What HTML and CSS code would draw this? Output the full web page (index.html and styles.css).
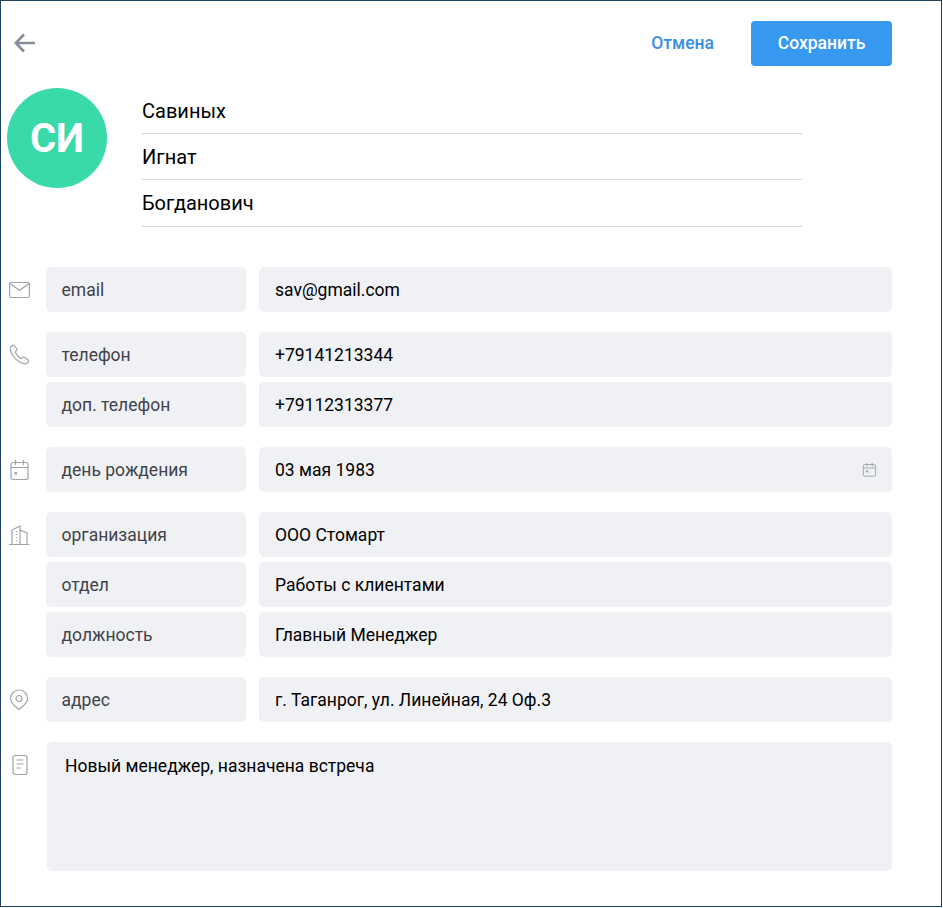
FILE: index.html
```html
<!DOCTYPE html>
<html lang="ru">
<head>
<meta charset="utf-8">
<title>Контакт</title>
<link rel="stylesheet" href="styles.css">
</head>
<body>
<main class="frame">
  <header class="topbar">
    <svg class="back" width="24" height="22" viewBox="0 0 24 22" fill="none" stroke="#868e9c" stroke-width="2.600"><path d="M22 11H3M11 2.500L2.800 11l8.200 8.500"/></svg>
    <div class="actions">
      <span class="cancel">Отмена</span>
      <span class="save">Сохранить</span>
    </div>
  </header>
  <section class="person">
    <div class="avatar">СИ</div>
    <div class="names">
      <div class="name">Савиных</div>
      <div class="name">Игнат</div>
      <div class="name">Богданович</div>
    </div>
  </section>
  <section class="groups">
    <div class="group">
      <div class="icon"><svg width="22" height="18" viewBox="0 0 22 18" fill="none" stroke="#9fa4ac" stroke-width="1.200"><rect x="0.600" y="1.500" width="19.800" height="15" rx="1.500"/><path d="M1 2.500l9.500 7 9.500-7"/></svg></div>
      <div class="rows">
        <div class="row"><div class="label">email</div><div class="value">sav@gmail.com</div></div>
      </div>
    </div>
    <div class="group">
      <div class="icon"><svg width="22" height="22" viewBox="0 0 22 22" fill="none" stroke="#9fa4ac" stroke-width="1.200"><path d="M2.500 2c1-1 2.200-1 3-.2l2 2.600c.6.800.5 1.600-.1 2.200L6.300 7.800c1 2.800 3.400 5.600 6.200 7l1.300-1.200c.6-.6 1.500-.6 2.200 0l3 2.200c.8.700.8 1.700 0 2.600-1 1.200-2.300 1.700-3.800 1.300C9 18.500 3.300 13 1.500 6.500c-.5-1.800 0-3.400 1-4.500z"/></svg></div>
      <div class="rows">
        <div class="row"><div class="label">телефон</div><div class="value">+79141213344</div></div>
        <div class="row"><div class="label">доп. телефон</div><div class="value">+79112313377</div></div>
      </div>
    </div>
    <div class="group">
      <div class="icon"><svg width="22" height="22" viewBox="0 0 22 22" fill="none" stroke="#9fa4ac" stroke-width="1.200"><rect x="2" y="3.500" width="17" height="17" rx="2"/><path d="M2 8.500h17M6.500 1v5M14.500 1v5"/><rect x="5.500" y="13" width="2.500" height="2.500" fill="#9fa4ac" stroke="none"/></svg></div>
      <div class="rows">
        <div class="row"><div class="label">день рождения</div><div class="value value-date">03 мая 1983<svg width="15" height="16" viewBox="0 0 22 23" fill="none" stroke="#9fa4ac" stroke-width="1.400"><rect x="2" y="3.500" width="18" height="17" rx="2"/><path d="M2 8.500h18M7 1v5M15 1v5"/><rect x="6" y="12" width="3" height="3" fill="#9fa4ac" stroke="none"/></svg></div></div>
      </div>
    </div>
    <div class="group">
      <div class="icon"><svg width="22" height="22" viewBox="0 0 22 22" fill="none" stroke="#9fa4ac" stroke-width="1.200"><path d="M0 20.500h20.500M3 20.500V6l8-4v18.500M11 6l7 3v11.500M7.500 7v1M7.500 10v1M7.500 13v1M7.500 16v1"/></svg></div>
      <div class="rows">
        <div class="row"><div class="label">организация</div><div class="value">ООО Стомарт</div></div>
        <div class="row"><div class="label">отдел</div><div class="value">Работы с клиентами</div></div>
        <div class="row"><div class="label">должность</div><div class="value">Главный Менеджер</div></div>
      </div>
    </div>
    <div class="group">
      <div class="icon"><svg width="20" height="22" viewBox="0 0 20 22" fill="none" stroke="#9fa4ac" stroke-width="1.200"><path d="M10 20.500C4.500 16.500 1.500 13 1.500 9.500a8.500 8.500 0 0 1 17 0c0 3.500-3 7-8.500 11z"/><circle cx="10" cy="9.500" r="3"/></svg></div>
      <div class="rows">
        <div class="row"><div class="label">адрес</div><div class="value">г. Таганрог, ул. Линейная, 24 Оф.3</div></div>
      </div>
    </div>
    <div class="group">
      <div class="icon icon-note"><svg width="18" height="22" viewBox="0 0 18 22" fill="none" stroke="#9fa4ac" stroke-width="1.200"><rect x="2" y="1.500" width="14" height="19" rx="2"/><path d="M5.500 6h7M5.500 10h7M5.500 14h4"/></svg></div>
      <div class="note">Новый менеджер, назначена встреча</div>
    </div>
  </section>
</main>
</body>
</html>
```
FILE: styles.css
```css
* { box-sizing: border-box; }
html, body { margin: 0; background: #fff; }
body { font-family: Roboto, "Noto Sans", sans-serif; color: #000; }
.frame {
  width: 942px;
  height: 907px;
  border: 1px solid #1f4262;
  padding: 20px 49px 0 6px;
}
.topbar { display: flex; justify-content: space-between; align-items: center; height: 45px; }
.back { margin: 0 0 1px 6px; }
.actions { display: flex; align-items: center; gap: 37px; }
.cancel { color: #368fe0; font-size: 17.500px; font-weight: 500; padding-bottom: 2px; }
.save {
  width: 141px;
  height: 45px;
  display: flex;
  align-items: center;
  justify-content: center;
  background: #3799f0;
  border-radius: 4px;
  color: #fff;
  font-size: 17.500px;
  font-weight: 500;
  padding-bottom: 2px;
}
.person { display: flex; gap: 35px; margin-top: 22px; }
.avatar {
  width: 100px;
  height: 100px;
  border-radius: 50%;
  background: #39d9a9;
  color: #fff;
  font-size: 40px;
  font-weight: 700;
  display: flex;
  align-items: center;
  justify-content: center;
}
.names { width: 660px; }
.name {
  height: 46px;
  border-bottom: 1px solid #d2d3d8;
  font-size: 20px;
  line-height: 46px;
  padding-bottom: 1px;
}
.name:last-child { height: 47px; }
.groups { display: flex; flex-direction: column; gap: 20px; margin-top: 40px; }
.group { display: flex; }
.icon { width: 39px; height: 45px; padding-left: 2px; display: flex; align-items: center; flex: none; }
.icon-note { width: 40px; height: 45px; padding-left: 4px; }
.rows { flex: 1; display: flex; flex-direction: column; gap: 5px; }
.row { display: flex; gap: 13px; height: 45px; font-size: 17.500px; }
.label, .value { background: #f0f1f5; border-radius: 5px; display: flex; align-items: center; padding-left: 16px; }
.label { width: 200px; color: #3f434a; padding-left: 15.500px; }
.value { flex: 1; }
.value-date { justify-content: space-between; padding-right: 15px; }
.note {
  flex: 1;
  height: 129px;
  background: #f0f1f5;
  border-radius: 5px;
  padding: 13px 18px;
  font-size: 17.500px;
  line-height: 22px;
}
```
